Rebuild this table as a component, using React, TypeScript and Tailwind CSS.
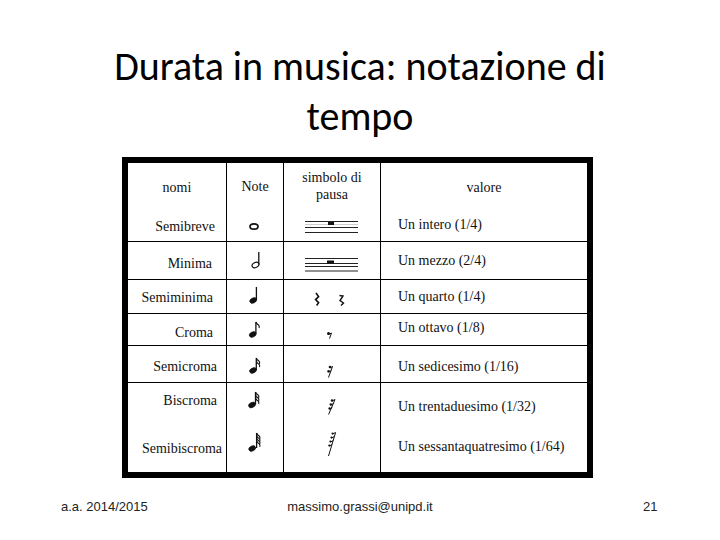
import React from 'react'

const serif = { fontFamily: '"Liberation Serif", "Times New Roman", serif' }

function Head({ cx, cy, open }: { cx: number; cy: number; open?: boolean }) {
  return (
    <ellipse
      cx={cx}
      cy={cy}
      rx={3.6}
      ry={2.5}
      transform={`rotate(-25 ${cx} ${cy})`}
      fill={open ? 'none' : '#111'}
      stroke="#111"
      strokeWidth={open ? 1.2 : 0.6}
    />
  )
}

function Flags({ x, y, n, gap }: { x: number; y: number; n: number; gap: number }) {
  return (
    <>
      {Array.from({ length: n }).map((_, i) => (
        <path
          key={i}
          d={`M${x} ${y + i * gap} q0.6 2 2.6 3 q1.2 1 0.6 3`}
          fill="none"
          stroke="#111"
          strokeWidth={1.1}
        />
      ))}
    </>
  )
}

function Stem({ x, y1, y2 }: { x: number; y1: number; y2: number }) {
  return <line x1={x} y1={y1} x2={x} y2={y2} stroke="#111" strokeWidth={1.3} />
}

function Staff({ ys }: { ys: number[] }) {
  return (
    <>
      {ys.map((y) => (
        <line key={y} x1={305} y1={y} x2={358} y2={y} stroke="#222" strokeWidth={1} />
      ))}
    </>
  )
}

function Pic({ x, y, w, h, children }: { x: number; y: number; w: number; h: number; children: React.ReactNode }) {
  return (
    <svg width={w} height={h} viewBox={`${x} ${y} ${w} ${h}`} className="block shrink-0">
      {children}
    </svg>
  )
}

function Row({
  top,
  h,
  name,
  nameCls,
  value,
  valueCls,
  note,
  rest,
}: {
  top: number
  h: number
  name: string
  nameCls: string
  value: string
  valueCls: string
  note: React.ReactNode
  rest: React.ReactNode
}) {
  return (
    <div className="flex border-b border-black" style={{ height: h }}>
      <div className={`w-[99px] border-r border-black flex items-center justify-end ${nameCls}`}>{name}</div>
      <div className="w-[57px] border-r border-black">
        <Pic x={227} y={top} w={56} h={h - 1}>{note}</Pic>
      </div>
      <div className="w-[97px] border-r border-black">
        <Pic x={284} y={top} w={96} h={h - 1}>{rest}</Pic>
      </div>
      <div className={`flex-1 flex items-center pl-[17px] ${valueCls}`}>{value}</div>
    </div>
  )
}

export default function App() {
  return (
    <div className="w-[720px] h-[540px] bg-white overflow-hidden flex flex-col text-black">
      <h1
        className="mt-[42px] h-[94px] text-center text-[40px] leading-[50px] text-black"
        style={{ fontFamily: 'Carlito, Lato, "Open Sans", sans-serif' }}
      >
        Durata in musica: notazione di
        <br />
        tempo
      </h1>

      <div className="mt-[21px] ml-[122px] w-[471px] border-[6px] border-black text-[14px] leading-[16px] text-[#111]" style={serif}>
        {/* header + semibreve */}
        <div className="flex border-b border-black h-[79px]">
          <div className="w-[99px] border-r border-black flex flex-col">
            <div className="h-[48px] flex items-center justify-center pt-[1px]">nomi</div>
            <div className="flex-1 flex items-center justify-end pr-[11px] pt-[1px]">Semibreve</div>
          </div>
          <div className="w-[57px] border-r border-black flex flex-col">
            <div className="h-[48px] flex items-center justify-center">Note</div>
            <Pic x={227} y={211} w={56} h={30}>
              <ellipse cx={254} cy={226.5} rx={4} ry={2.7} fill="none" stroke="#111" strokeWidth={1.7} />
            </Pic>
          </div>
          <div className="w-[97px] border-r border-black flex flex-col">
            <div className="h-[48px] flex items-center justify-center text-center leading-[17px] pb-[3px]">
              simbolo di
              <br />
              pausa
            </div>
            <Pic x={284} y={211} w={96} h={30}>
              <Staff ys={[221.5, 227.5, 232.5]} />
              <line x1={305} y1={224.5} x2={358} y2={224.5} stroke="#ccc" strokeWidth={1} />
              <rect x={328} y={222} width={6} height={3} fill="#111" />
            </Pic>
          </div>
          <div className="flex-1 flex flex-col">
            <div className="h-[48px] flex items-center justify-center pt-[2px]">valore</div>
            <div className="flex-1 flex items-center pl-[17px] pb-[2px]">Un intero (1/4)</div>
          </div>
        </div>

        <Row
          top={242}
          h={38}
          name="Minima"
          nameCls="pr-[14px] pt-[6px]"
          value="Un mezzo (2/4)"
          valueCls="pt-[1px]"
          note={
            <>
              <Head cx={255.5} cy={265} open />
              <Stem x={258.8} y1={252} y2={264.5} />
            </>
          }
          rest={
            <>
              <Staff ys={[258.5, 263.5, 266.5, 271]} />
              <rect x={327} y={260.5} width={7} height={3} fill="#111" />
            </>
          }
        />

        <Row
          top={280}
          h={34}
          name="Semiminima"
          nameCls="pr-[13px] pt-[2px]"
          value="Un quarto (1/4)"
          valueCls="pt-[1px]"
          note={
            <>
              <Head cx={253.2} cy={300.5} />
              <Stem x={256.4} y1={287} y2={300} />
            </>
          }
          rest={
            <>
              <path d="M316 293 L318.6 296.6 L315.6 299.6 L318.6 302.6 L316.6 305.5" fill="none" stroke="#111" strokeWidth={1.6} />
              <path d="M339.5 295.5 L343 296 L340 300.5 L343.5 303 L341 305.5" fill="none" stroke="#111" strokeWidth={1.4} />
            </>
          }
        />

        <Row
          top={314}
          h={32}
          name="Croma"
          nameCls="pr-[13px] pt-[6px]"
          value="Un ottavo (1/8)"
          valueCls="pb-[4px]"
          note={
            <>
              <Head cx={252.7} cy={334.5} />
              <Stem x={255.9} y1={322} y2={334} />
              <Flags x={255.9} y={322} n={1} gap={0} />
            </>
          }
          rest={
            <>
              <circle cx={328.5} cy={333.5} r={1.5} fill="#111" />
              <path d="M328.5 334.5 L331.5 333 L329.5 338.5" fill="none" stroke="#111" strokeWidth={1} />
            </>
          }
        />

        <Row
          top={346}
          h={37}
          name="Semicroma"
          nameCls="pr-[9px] pt-[5px]"
          value="Un sedicesimo (1/16)"
          valueCls="pt-[5px]"
          note={
            <>
              <Head cx={253} cy={370.5} />
              <Stem x={256.3} y1={358} y2={370} />
              <Flags x={256.3} y={358} n={2} gap={3.2} />
            </>
          }
          rest={
            <>
              <circle cx={330} cy={367} r={1.3} fill="#111" />
              <circle cx={328.6} cy={371.2} r={1.3} fill="#111" />
              <path d="M330 368 L332.5 366.5 L328.5 377.5 M328.6 372.2 L331.2 370.8" fill="none" stroke="#111" strokeWidth={1} />
            </>
          }
        />

        {/* biscroma + semibiscroma */}
        <div className="flex h-[89px]">
          <div className="w-[99px] border-r border-black flex flex-col">
            <div className="h-[42px] flex items-center justify-end pr-[9px] pb-[6px]">Biscroma</div>
            <div className="flex-1 flex items-center justify-end pr-[4px] pt-[1px]">Semibiscroma</div>
          </div>
          <div className="w-[57px] border-r border-black">
            <Pic x={227} y={383} w={56} h={89}>
              <Head cx={252} cy={405} />
              <Stem x={255.5} y1={392} y2={404.5} />
              <Flags x={255.5} y={392} n={3} gap={3} />
              <Head cx={252.2} cy={448.5} />
              <Stem x={256.6} y1={433} y2={448} />
              <Flags x={256.6} y={433} n={4} gap={2.6} />
            </Pic>
          </div>
          <div className="w-[97px] border-r border-black">
            <Pic x={284} y={383} w={96} h={89}>
              <circle cx={332} cy={400.5} r={1.2} fill="#111" />
              <circle cx={330.8} cy={404.5} r={1.2} fill="#111" />
              <circle cx={329.6} cy={408.5} r={1.2} fill="#111" />
              <path
                d="M332 401 L335 399.5 L328.6 414.5 M330.8 405 L333.6 403.6 M329.6 409 L332.3 407.6"
                fill="none"
                stroke="#111"
                strokeWidth={1}
              />
              <circle cx={332.6} cy={433.5} r={1.1} fill="#111" />
              <circle cx={331.5} cy={437.5} r={1.1} fill="#111" />
              <circle cx={330.4} cy={441.5} r={1.1} fill="#111" />
              <circle cx={329.3} cy={445.5} r={1.1} fill="#111" />
              <path
                d="M332.6 434 L335.6 432.5 L328.5 456 M331.5 438 L334.4 436.6 M330.4 442 L333.2 440.6 M329.3 446 L332 444.6"
                fill="none"
                stroke="#111"
                strokeWidth={1}
              />
            </Pic>
          </div>
          <div className="flex-1 flex flex-col">
            <div className="h-[42px] flex items-center pl-[17px] pt-[5px]">Un trentaduesimo (1/32)</div>
            <div className="flex-1 flex items-center pl-[17px] pb-[3px]">Un sessantaquatresimo (1/64)</div>
          </div>
        </div>
      </div>

      <div
        className="mt-[21px] flex items-center h-[16px] text-[13px] text-[#222]"
        style={{ fontFamily: '"Liberation Sans", Arial, sans-serif' }}
      >
        <span className="ml-[61px] w-[150px]">a.a. 2014/2015</span>
        <span className="w-[298px] text-center">massimo.grassi@unipd.it</span>
        <span className="ml-[134px]">21</span>
      </div>
    </div>
  )
}
